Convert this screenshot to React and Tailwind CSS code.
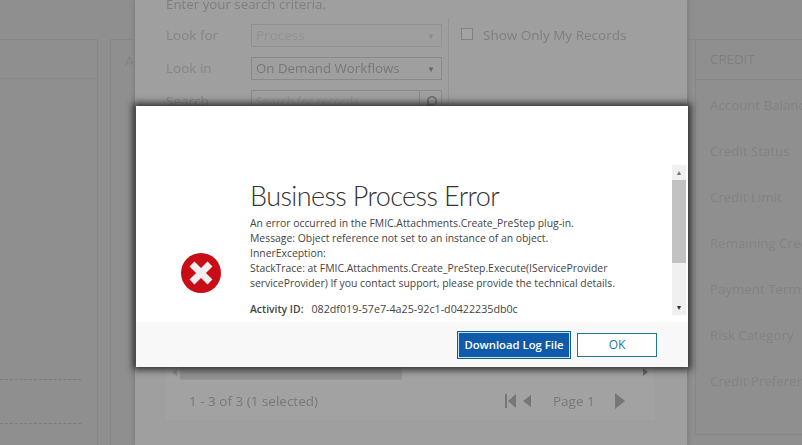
import React from 'react';

const font = { fontFamily: '"Open Sans", "Noto Sans", sans-serif' };
const titleFont = { fontFamily: 'Lato, Roboto, sans-serif' };

const creditFields = ['Account Balance', 'Credit Status', 'Credit Limit', 'Remaining Credit', 'Payment Terms', 'Risk Category', 'Credit Preference'];

function ErrorIcon() {
  return (
    <svg width="40" height="40" viewBox="0 0 40 40" className="shrink-0">
      <circle cx="20" cy="20" r="20" fill="#c90d17" />
      <path d="M11 11 L29 29 M29 11 L11 29" stroke="#f4eeee" strokeWidth="7" />
    </svg>
  );
}

function SearchRow({ label, children }) {
  return (
    <div className="flex items-center h-[23px] mb-[10px]">
      <span className="w-[85px] text-[13.5px] text-[#868686]">{label}</span>
      {children}
    </div>
  );
}

function Backdrop() {
  return (
    <div className="flex h-[445px] w-[802px] bg-[#8f8f8f] pt-[39px] overflow-hidden blur-[0.4px]">
      {/* Left panel */}
      <div className="w-[98px] shrink-0 border-t border-r border-[#888888]">
        <div className="h-[39px] border-b border-[#888888]" />
        <div className="h-[300px]" />
        <div className="w-[81px] border-b border-dashed border-[#7c7c7c]" />
        <div className="h-[44px] w-[81px] border-b border-dashed border-[#7c7c7c]" />
      </div>
      {/* Middle panel, mostly behind the dialog */}
      <div className="w-[597px] shrink-0 ml-[12px] border-t border-l border-[#888888] pl-[14px] pt-[10px] text-[14px] text-[#838383]">A</div>
      {/* Credit panel */}
      <div className="w-[120px] shrink-0 -ml-[12px] border-t border-l border-b border-[#888888] mb-[10px]">
        <div className="h-[40px] border-b border-[#888888] pl-[14px] flex items-center text-[13.3px] text-[#7f7f7f]">CREDIT</div>
        <div className="flex flex-col pl-[14px] pt-[15px] gap-[26px]">
          {creditFields.map((name) => (
            <span key={name} className="h-[20px] text-[13.3px] leading-[20px] text-[#838383] whitespace-nowrap">{name}</span>
          ))}
        </div>
      </div>
    </div>
  );
}

function LookupDialog() {
  return (
    <div className="absolute left-[135px] top-0 w-[552px] h-[445px] bg-[#9f9f9f] overflow-hidden flex flex-col pl-[31px] shadow-[-2px_0_3px_#828282,2px_0_3px_#828282]">
      <div className="blur-[0.4px] flex flex-col flex-1">
        <div className="-mt-[7px] h-[24px] text-[13.3px] leading-[22px] text-[#7f7f7f]">Enter your search criteria.</div>
        <div className="flex pt-[7px]">
          <div className="w-[282px] shrink-0">
            <SearchRow label="Look for">
              <div className="w-[191px] h-[23px] border border-[#919191] pl-[4px] flex items-center justify-between pr-[6px] text-[13.5px] text-[#929292]">
                Process<span className="text-[8px] text-[#8a8a8a]">▼</span>
              </div>
            </SearchRow>
            <SearchRow label="Look in">
              <div className="w-[191px] h-[23px] border border-[#8a8a8a] pl-[4px] flex items-center justify-between pr-[6px] text-[13.3px] text-[#777777]">
                On Demand Workflows<span className="text-[8px] text-[#666666]">▼</span>
              </div>
            </SearchRow>
            <SearchRow label="Search">
              <div className="w-[191px] h-[23px] border border-[#8a8a8a] pl-[4px] flex items-center justify-between text-[12px] text-[#929292]">
                Search for records
                <span className="w-[22px] h-full border-l border-[#8a8a8a] flex items-center justify-center">
                  <svg width="14" height="14" viewBox="0 0 14 14" fill="none" stroke="#6a6a6a" strokeWidth="1.6">
                    <circle cx="8" cy="6" r="4.2" />
                    <path d="M5 9 L1.5 12.5" />
                  </svg>
                </span>
              </div>
            </SearchRow>
          </div>
          <div className="-mt-[6px] h-[100px] border-l border-[#939393] pl-[12px] pt-[10px] flex items-start gap-[10px]">
            <span className="w-[12px] h-[12px] border border-[#828282] bg-[#a3a3a3]" />
            <span className="text-[13.5px] leading-[20px] -mt-[3px] text-[#7f7f7f]">Show Only My Records</span>
          </div>
        </div>
        <div className="mt-auto mb-[25px] w-[489px] h-[65px] bg-[#a2a2a2]">
          <div className="flex items-end h-[25px] pl-[6px] pr-[7px]">
            <svg width="5" height="8" viewBox="0 0 5 8" fill="#8a8a8a" className="mb-[4px]">
              <path d="M5 0 V8 L0 4 Z" />
            </svg>
            <div className="w-[222px] h-full ml-[3px] bg-[#919191] border-b border-[#979797]" />
            <svg width="5" height="8" viewBox="0 0 5 8" fill="#666666" className="ml-auto mb-[4px]">
              <path d="M0 0 V8 L5 4 Z" />
            </svg>
          </div>
          <div className="flex items-center h-[40px] pl-[23px] pt-[2px] text-[13.5px] text-[#787878]">
            <span>1 - 3 of 3 (1 selected)</span>
            <div className="ml-auto flex items-center pr-[30px]">
              <svg width="30" height="16" viewBox="0 0 30 16" fill="#767676">
                <rect x="0" y="1" width="2" height="14" />
                <path d="M11 1 V15 L3 8 Z" />
                <path d="M26 2 V14 L18 8 Z" />
              </svg>
              <span className="ml-[18px] mr-[22px] w-[40px] whitespace-nowrap">Page 1</span>
              <svg width="10" height="16" viewBox="0 0 10 16" fill="#767676">
                <path d="M0 0 V16 L10 8 Z" />
              </svg>
            </div>
          </div>
        </div>
      </div>
    </div>
  );
}

function ErrorModal() {
  return (
    <div className="absolute left-[136px] top-[106px] w-[552px] h-[261px] bg-white flex flex-col shadow-[0_0_7px_3px_#303030]">
      <div className="h-[216px] flex relative">
        <div className="w-[114px] shrink-0 pl-[45px] pt-[147px]">
          <ErrorIcon />
        </div>
        <div className="flex-1 pt-[72px]">
          <h1 className="text-[27px] leading-[36px] tracking-[-0.6px] font-light text-[#333333] whitespace-nowrap" style={titleFont}>Business Process Error</h1>
          <div className="mt-[2px] text-[10.4px] leading-[15px] text-[#444444] whitespace-nowrap">
            <p>An error occurred in the FMIC.Attachments.Create_PreStep plug-in.</p>
            <p>Message: Object reference not set to an instance of an object.</p>
            <p>InnerException:</p>
            <p>StackTrace: at FMIC.Attachments.Create_PreStep.Execute(IServiceProvider</p>
            <p>serviceProvider) If you contact support, please provide the technical details.</p>
          </div>
          <p className="mt-[11px] text-[10.4px] leading-[15px] text-[#444444] whitespace-nowrap">
            <span className="font-semibold mr-[8px]">Activity ID:</span>
            <span className="text-[10.7px]">082df019-57e7-4a25-92c1-d0422235db0c</span>
          </p>
        </div>
        {/* Scrollbar */}
        <div className="absolute right-[2px] top-[59px] w-[14px] h-[150px] bg-[#f0f0f0] flex flex-col items-center">
          <div className="h-[15px] flex items-center text-[7px] leading-none text-[#777777]">▲</div>
          <div className="w-full h-[83px] bg-[#c2c2c2]" />
          <div className="mt-auto h-[15px] flex items-center text-[7px] leading-none text-[#333333]">▼</div>
        </div>
      </div>
      <div className="flex-1 bg-[#f8f8f8] flex items-center justify-end gap-[6px] pr-[31px] pt-[1px]">
        <button className="w-[114px] h-[28px] bg-[#0f5aaa] border border-[#12617f] outline outline-1 -outline-offset-2 outline-[#bfe6f2] text-white text-[11.3px] font-semibold">
          Download Log File
        </button>
        <button className="w-[80px] h-[24px] bg-white border border-[#1b7a9c] text-[#1b7a9c] text-[12px]">OK</button>
      </div>
    </div>
  );
}

export default function App() {
  return (
    <div className="relative w-[802px] h-[445px] overflow-hidden" style={font}>
      <Backdrop />
      <LookupDialog />
      <ErrorModal />
    </div>
  );
}
